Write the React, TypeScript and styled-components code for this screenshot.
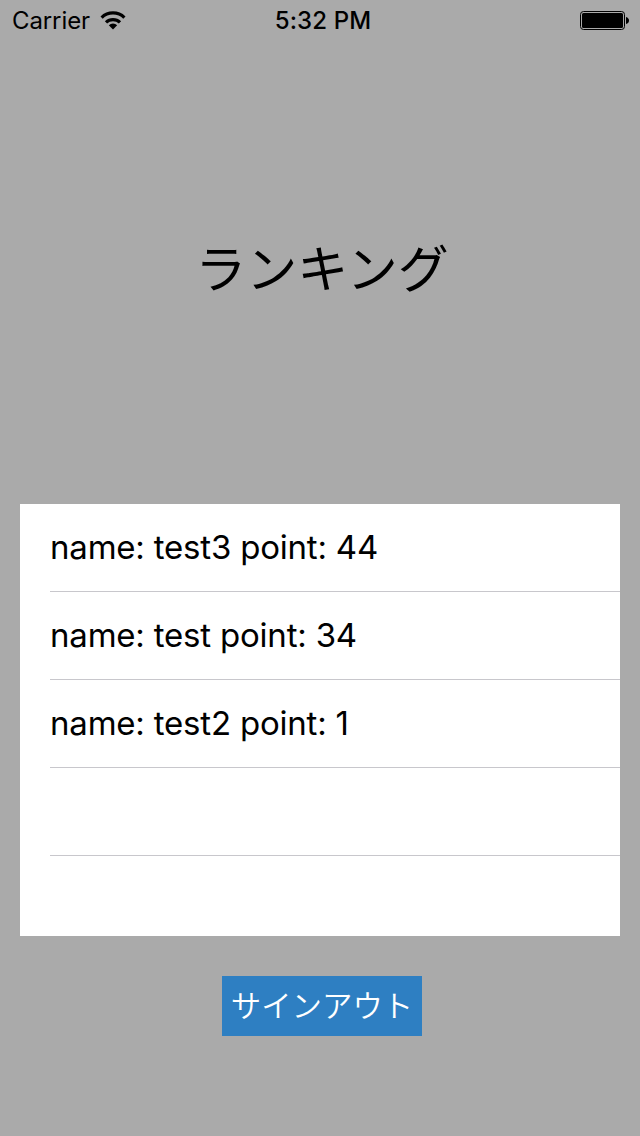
import React from "react";
import styled, { createGlobalStyle } from "styled-components";

const GlobalStyle = createGlobalStyle`
  * { box-sizing: border-box; }
  body { margin: 0; background: #aaaaaa; color: #000; font-family: Inter, "Noto Sans CJK JP", sans-serif; }
`;

const Screen = styled.main`
  width: 640px;
  height: 1136px;
  display: flex;
  flex-direction: column;
  align-items: center;
  background: #aaaaaa;
`;

const StatusBar = styled.header`
  width: 100%;
  height: 40px;
  padding: 1px 11px 0 12px;
  display: grid;
  grid-template-columns: 1fr auto 1fr;
  align-items: center;
  line-height: 40px;
`;

const Network = styled.div`
  display: flex;
  align-items: center;
  gap: 10px;
`;

const Carrier = styled.span`
  font-size: 24px;
  letter-spacing: -0.1px;
`;

const Clock = styled.time`
  padding-left: 5px;
  font-size: 24px;
  font-weight: 550;
  letter-spacing: 0.15px;
`;

const Power = styled.div`
  display: flex;
  justify-content: flex-end;
`;

const StatusIcon = styled.svg`
  display: block;
  margin-bottom: 2px;
`;

const Title = styled.h1`
  margin: 186px 0 0 4px;
  height: 80px;
  font-family: "Noto Sans CJK JP", sans-serif;
  font-size: 51px;
  font-weight: 400;
  line-height: 80px;
`;

const List = styled.ul`
  width: 600px;
  height: 432px;
  margin: 198px 0 0;
  padding: 0 0 0 30px;
  list-style: none;
  background: #fff;
  overflow: hidden;
`;

const Row = styled.li`
  height: 88px;
  border-bottom: 1px solid #c8c7cc;
  font-size: 33px;
  letter-spacing: -0.2px;
  line-height: 87px;
  white-space: pre;
`;

const SignOut = styled.button`
  width: 200px;
  height: 60px;
  margin: 40px 0 0 4px;
  padding: 0 0 3px;
  border: 0;
  background: #2e7fc2;
  color: #fff;
  font-family: "Noto Sans CJK JP", sans-serif;
  font-size: 30.4px;
  font-weight: 350;
  line-height: 57px;
  white-space: nowrap;
`;

const rows = ["name: test3 point: 44", "name: test point: 34", "name: test2 point: 1", "", ""];

export default function App() {
  return (
    <Screen>
      <GlobalStyle />
      <StatusBar>
        <Network>
          <Carrier>Carrier</Carrier>
          <StatusIcon width="26" height="19" viewBox="0 0 26 19" fill="none" stroke="#000" strokeWidth="3.2">
            <path d="M1.600 6.600a16.300 16.300 0 0 1 22.800 0M6 11.400a10 10 0 0 1 14 0" />
            <path d="M13 18.500l-4.200-4.200a6 6 0 0 1 8.400 0z" fill="#000" stroke="none" />
          </StatusIcon>
        </Network>
        <Clock>5:32 PM</Clock>
        <Power>
          <StatusIcon width="49" height="19" viewBox="0 0 49 19">
            <rect x="0.5" y="0.5" width="44" height="18" rx="3" fill="none" stroke="#000" />
            <rect x="2" y="2" width="41" height="15" rx="1.500" />
            <path d="M46 6q3 1 3 3.500t-3 3.500z" />
          </StatusIcon>
        </Power>
      </StatusBar>
      <Title>ランキング</Title>
      <List>
        {rows.map((text, i) => <Row key={i}>{text}</Row>)}
      </List>
      <SignOut>サインアウト</SignOut>
    </Screen>
  );
}
